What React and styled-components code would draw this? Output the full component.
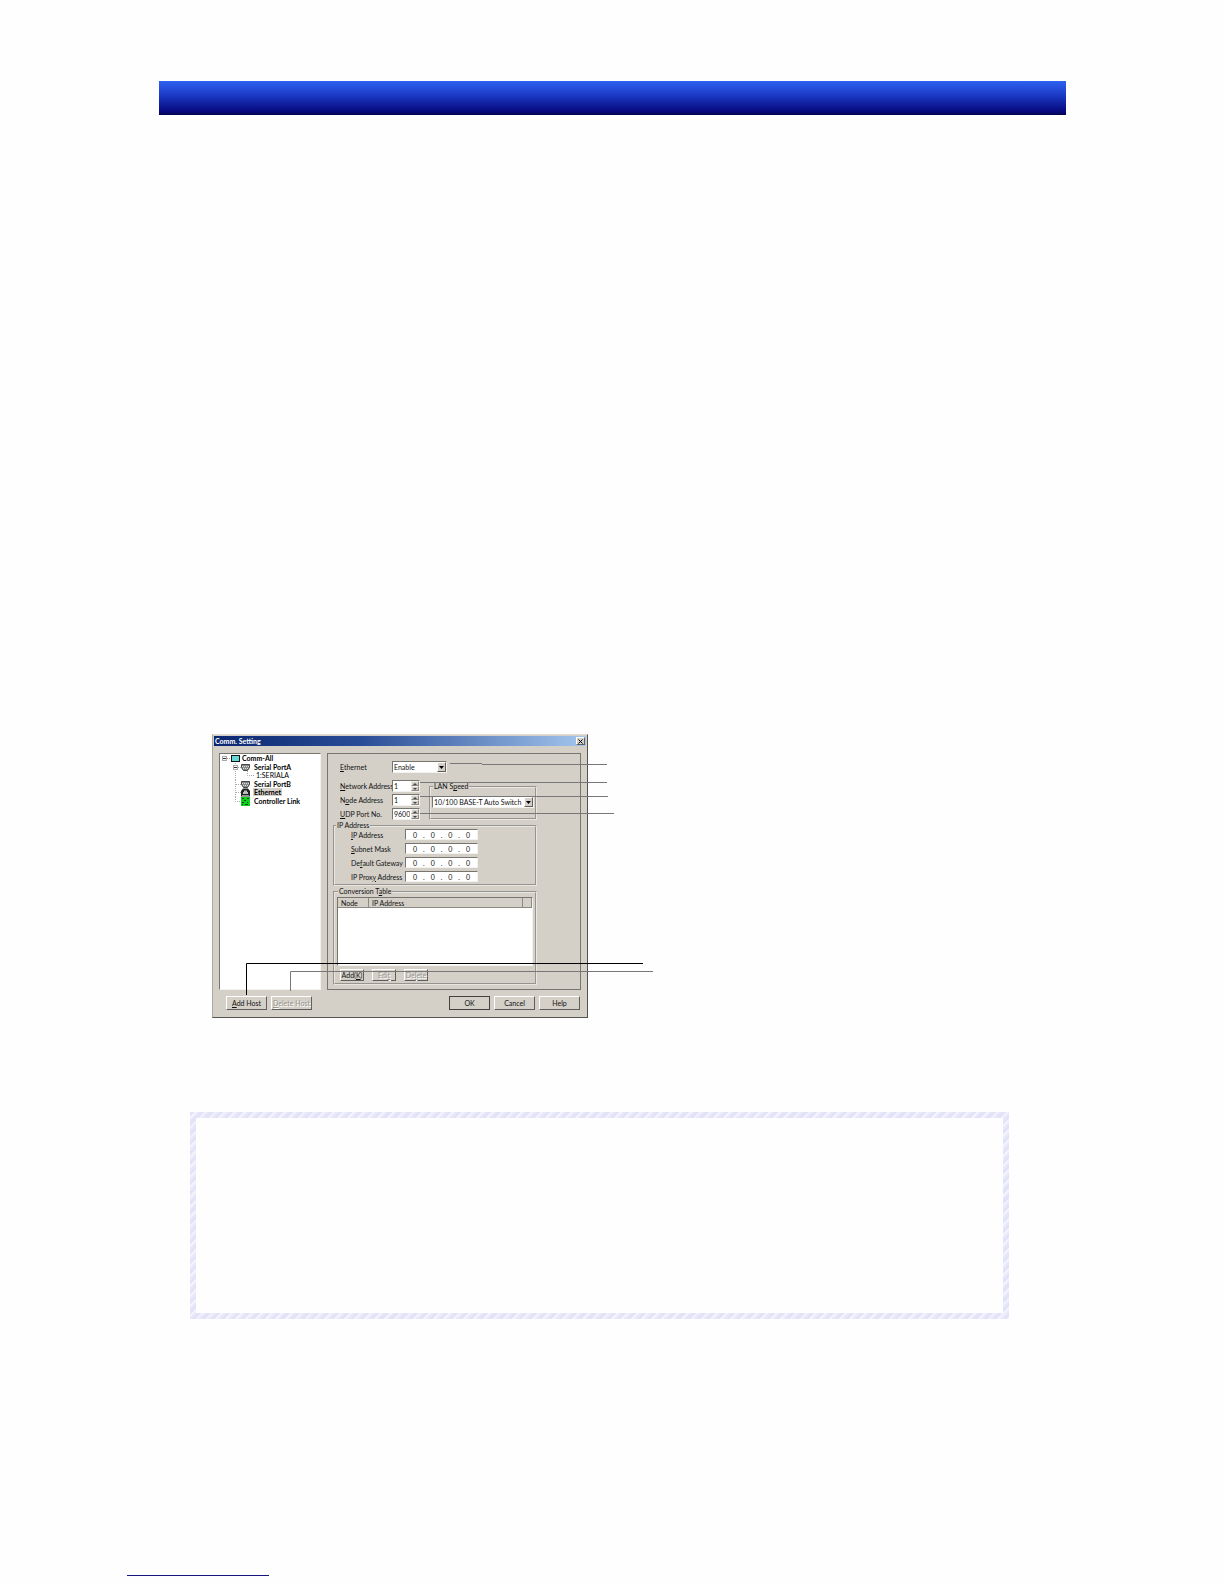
import React from 'react';
import styled, { createGlobalStyle, css } from 'styled-components';

const FACE = '#d4d0c8';
const SHADE = '#77756f';

const Global = createGlobalStyle`
  * { box-sizing: border-box; }
  body { margin: 0; background: #fefefe; }
  body, button, input, select { font-family: Lato, 'Liberation Sans', Arial, sans-serif; font-size: 7px; line-height: 8px; color: #111; }
`;

const Page = styled.main`
  min-height: 100vh;
  display: flex;
  flex-direction: column;
  padding: 81px 158px 8px 159px;
`;
const Banner = styled.header`
  height: 34px;
  background: linear-gradient(#2d62f0, #1c3cc8 40%, #06087c 90%, #030350);
`;
const Figure = styled.section`
  position: relative;
  margin: 619px 0 0 53px;
  width: 442px;
`;
const Note = styled.aside`
  margin: 94px 57px 0 31px;
  height: 207px;
  padding: 6px;
  background: repeating-linear-gradient(135deg, #e2e2f8 0 3px, #f3f3fd 3px 5px, #e9e9fa 5px 7px);
`;
const NoteBody = styled.div`
  height: 100%;
  background: #fefefe;
`;
const FooterRule = styled.hr`
  width: 142px;
  height: 1px;
  margin: auto 0 0 -32px;
  border: 0;
  background: #15157c;
`;

const Dialog = styled.form`
  width: 376px;
  background: ${FACE};
  border: 1px solid;
  border-color: #dedbd4 #55534f #55534f #aaa7a0;
  padding: 1px;
`;
const TitleBar = styled.div`
  height: 10px;
  display: flex;
  align-items: center;
  justify-content: space-between;
  padding: 0 1px;
  background: linear-gradient(90deg, #0b2670, #2a4d97 40%, #a3c6ee);
`;
const Title = styled.h1`
  margin: 0;
  font-size: 7px;
  line-height: 10px;
  color: #fff;
`;
const raised = css`
  background: ${FACE};
  border: 1px solid;
  border-color: #fff #605e5a #605e5a #fff;
`;
const CloseButton = styled.button`
  ${raised}
  width: 9px;
  height: 8px;
  padding: 0;
  display: grid;
  place-items: center;
`;
const Body = styled.div`
  display: flex;
  gap: 6px;
  height: 244px;
  padding: 7px 5px 0;
`;
const Tree = styled.ul`
  flex: 0 0 102px;
  margin: 0;
  padding: 0 1px;
  list-style: none;
  background: #fff;
  border: 1px solid;
  border-color: ${SHADE} #f4f2ee #f4f2ee ${SHADE};
  display: grid;
  grid-template-rows: repeat(3, 9px 8px);
  align-content: start;
`;
const TreeItem = styled.li`
  display: flex;
  align-items: flex-start;
  font-weight: ${(p) => (p.$plain ? 'normal' : 'bold')};
  white-space: nowrap;
  color: #000;
  svg { flex: none; }
`;
const TreeLabel = styled.span`
  padding: 0 1px;
  background: ${(p) => (p.$selected ? FACE : 'transparent')};
`;
const Panel = styled.div`
  flex: 1;
  border: 1px solid ${SHADE};
  padding: 7px 43px 0 5px;
`;
const Settings = styled.div`
  display: flex;
  gap: 9px;
  padding-left: 7px;
`;
const Fields = styled.div`
  display: grid;
  gap: 2px;
  flex: none;
`;
const Field = styled.div`
  display: grid;
  grid-template-columns: ${(p) => p.$label}px auto;
  align-items: center;
  justify-content: start;
  white-space: nowrap;
`;
const EthernetField = styled(Field)`
  padding: 0 0 7px 7px;
`;
const sunken = css`
  background: #fff;
  border: 1px solid;
  border-color: ${SHADE} #f4f2ee #f4f2ee ${SHADE};
`;
const Spin = styled.div`
  ${sunken}
  width: 28px;
  height: 12px;
  display: flex;
`;
const SpinInput = styled.input`
  flex: 1;
  min-width: 0;
  border: 0;
  padding: 0 1px;
  background: none;
`;
const SpinButtons = styled.div`
  width: 8px;
  display: grid;
  grid-template-rows: 1fr 1fr;
`;
const ArrowButton = styled.button`
  ${raised}
  border-color: #f0eeea #8b8983 #8b8983 #f0eeea;
  min-height: 0;
  padding: 0;
  display: grid;
  place-items: center;
`;
const SelectBox = styled.div`
  ${sunken}
  position: relative;
  width: ${(p) => p.$width};
  height: 12px;
`;
const Select = styled.select`
  appearance: none;
  display: block;
  width: 100%;
  height: 10px;
  border: 0;
  padding: 0 8px 0 1px;
  background: none;
`;
const DropMark = styled.span`
  ${raised}
  position: absolute;
  inset: 0 0 0 auto;
  width: 9px;
  display: grid;
  place-items: center;
  pointer-events: none;
`;
const Group = styled.fieldset`
  min-width: 0;
  margin: ${(p) => p.$margin || '0'};
  padding: ${(p) => p.$padding};
  border: 2px groove #e9e7e2;
`;
const Legend = styled.legend`
  margin-left: 1px;
  padding: 0 1px;
  height: 7px;
  line-height: 7px;
`;
const SpeedGroup = styled(Group)`
  flex: 1;
`;
const Addresses = styled.div`
  display: grid;
  gap: 3px;
  padding-left: 16px;
`;
const AddressBox = styled.div`
  ${sunken}
  width: 73px;
  height: 11px;
  padding: 0 1px;
  display: flex;
  align-items: center;
`;
const Octet = styled.input`
  flex: 1;
  min-width: 0;
  border: 0;
  padding: 0;
  background: none;
  text-align: center;
`;
const ListBox = styled.div`
  ${sunken}
  height: 69px;
`;
const Table = styled.table`
  width: 100%;
  border-collapse: separate;
  border-spacing: 0;
  table-layout: fixed;
`;
const Th = styled.th`
  width: ${(p) => p.$width || 'auto'};
  height: 10px;
  padding: 0 3px;
  background: ${FACE};
  border: solid;
  border-width: 0 1px 1px 0;
  border-color: #8b8983;
  font-weight: normal;
  line-height: 8px;
  text-align: left;
`;
const TableButtons = styled.div`
  display: flex;
  gap: 8px;
  padding: 3px 0 0 3px;
`;
const Button = styled.button`
  ${raised}
  width: ${(p) => (p.$small ? '24px' : '41px')};
  height: ${(p) => (p.$small ? '12px' : '14px')};
  padding: 0;
  white-space: nowrap;
  outline: ${(p) => (p.$primary ? '1px solid #44423f' : 'none')};
  outline-offset: -1px;
  &:disabled { color: #96938c; text-shadow: 1px 1px 0 #fff; }
`;
const Actions = styled.div`
  display: flex;
  gap: 4px;
  padding: 6px 6px 6px 12px;
`;
const Spacer = styled.div`
  flex: 1;
`;
const Callouts = styled.svg`
  position: absolute;
  left: 0;
  top: 0;
  pointer-events: none;
`;

const Down = () => (
  <svg width="5" height="3" viewBox="0 0 5 3" aria-hidden="true"><path d="M0 0h5L2.5 3z" fill="#000" /></svg>
);
const Tick = ({ up }) => (
  <svg width="4" height="2" viewBox="0 0 4 2" aria-hidden="true"><path d={up ? 'M0 2h4L2 0z' : 'M0 0h4L2 2z'} fill="#444" /></svg>
);
const dots = { stroke: '#aaa', strokeDasharray: '1 1', fill: 'none' };
const Expander = ({ x }) => (
  <g>
    <rect x={x + 0.5} y="2.5" width="4" height="4" fill="#fff" stroke="#aaa" />
    <path d={`M${x + 1} 4.5h3`} stroke="#333" />
  </g>
);
const SerialIcon = () => (
  <g>
    <path d="M20.500 1.500h8v3l-2 3h-4l-2-3z" fill="#8a8a88" stroke="#444" />
    <path d="M21 3.500h7M22 5.500h5" stroke="#ddd" strokeDasharray="1 1" />
  </g>
);
const art = {
  root: <><path d="M6 4.500h4" {...dots} /><Expander x={1} /><rect x="10.500" y="1.500" width="8" height="6" fill="#65d8d5" stroke="#111" /></>,
  portA: <><path d="M14.500 0v9M17 4.500h3" {...dots} /><Expander x={12} /><SerialIcon /></>,
  child: <><path d="M14.500 0v9M26.500 0v4.500h7" {...dots} /></>,
  portB: <><path d="M14.500 0v9M15 4.500h5" {...dots} /><SerialIcon /></>,
  ethernet: <><path d="M14.500 0v9M15 4.500h5" {...dots} /><path d="M20 8.500V3l2-2.500h5l2 2.500v5.500z" fill="#222" /><path d="M22 6V4h1V2.500h3V4h1v2z" fill="#bbb" /><path d="M21 7.500h7" stroke="#999" /></>,
  link: <><path d="M14.500 0v4.500h5" {...dots} /><rect x="20" y="0" width="9" height="9" fill="#10d020" /><path d="M21 1.500h2M26 1.500h2M23 3.500h2M21 5.500h2M26 5.500h1M24 7.500h3M21 7.500h1" stroke="#064a0a" fill="none" /></>,
};
const nodes = [
  ['root', 'Comm-All', 20],
  ['portA', 'Serial PortA', 32],
  ['child', '1:SERIALA', 34],
  ['portB', 'Serial PortB', 32],
  ['ethernet', 'Ethernet', 32],
  ['link', 'Controller Link', 32],
];

function NumberField({ id, value, children }) {
  return (
    <Field $label={52}>
      <label htmlFor={id}>{children}</label>
      <Spin>
        <SpinInput id={id} defaultValue={value} />
        <SpinButtons>
          <ArrowButton type="button" aria-label="Increase"><Tick up /></ArrowButton>
          <ArrowButton type="button" aria-label="Decrease"><Tick /></ArrowButton>
        </SpinButtons>
      </Spin>
    </Field>
  );
}

function AddressField({ id, children }) {
  return (
    <Field $label={54}>
      <label htmlFor={id}>{children}</label>
      <AddressBox>
        <Octet id={id} defaultValue="0" />.
        <Octet aria-label="Second octet" defaultValue="0" />.
        <Octet aria-label="Third octet" defaultValue="0" />.
        <Octet aria-label="Fourth octet" defaultValue="0" />
      </AddressBox>
    </Field>
  );
}

export default function App() {
  return (
    <Page>
      <Global />
      <Banner />
      <Figure>
        <Dialog onSubmit={(e) => e.preventDefault()}>
          <TitleBar>
            <Title>Comm. Setting</Title>
            <CloseButton type="button" aria-label="Close">
              <svg width="5" height="5" viewBox="0 0 5 5"><path d="M.5.5l4 4M4.500.5l-4 4" stroke="#000" /></svg>
            </CloseButton>
          </TitleBar>
          <Body>
            <Tree>
              {nodes.map(([kind, label, width]) => (
                <TreeItem key={kind} $plain={kind === 'child'}>
                  <svg width={width} height="9" viewBox={`0 0 ${width} 9`} aria-hidden="true">{art[kind]}</svg>
                  <TreeLabel $selected={kind === 'ethernet'}>{label}</TreeLabel>
                </TreeItem>
              ))}
            </Tree>
            <Panel>
              <EthernetField $label={52}>
                <label htmlFor="ethernet"><u>E</u>thernet</label>
                <SelectBox $width="55px">
                  <Select id="ethernet"><option>Enable</option></Select>
                  <DropMark><Down /></DropMark>
                </SelectBox>
              </EthernetField>
              <Settings>
                <Fields>
                  <NumberField id="network" value="1"><u>N</u>etwork Address</NumberField>
                  <NumberField id="node" value="1">N<u>o</u>de Address</NumberField>
                  <NumberField id="udp" value="9600"><u>U</u>DP Port No.</NumberField>
                </Fields>
                <SpeedGroup $margin="3px 0 0" $padding="6px 1px 0">
                  <Legend>LAN S<u>p</u>eed</Legend>
                  <SelectBox $width="100%">
                    <Select aria-label="LAN Speed"><option>10/100 BASE-T Auto Switch</option></Select>
                    <DropMark><Down /></DropMark>
                  </SelectBox>
                </SpeedGroup>
              </Settings>
              <Group $margin="2px 0 0" $padding="0 0 2px">
                <Legend>IP Address</Legend>
                <Addresses>
                  <AddressField id="ip"><u>I</u>P Address</AddressField>
                  <AddressField id="mask"><u>S</u>ubnet Mask</AddressField>
                  <AddressField id="gateway">De<u>f</u>ault Gateway</AddressField>
                  <AddressField id="proxy">IP Prox<u>y</u> Address</AddressField>
                </Addresses>
              </Group>
              <Group $margin="2px 0 0" $padding="2px 2px 2px">
                <Legend>Conversion T<u>a</u>ble</Legend>
                <ListBox>
                  <Table>
                    <thead><tr><Th $width="31px">Node</Th><Th>IP Address</Th><Th $width="9px" aria-label="Spare" /></tr></thead>
                  </Table>
                </ListBox>
                <TableButtons>
                  <Button type="button" $small>Add(<u>K</u>)</Button>
                  <Button type="button" $small disabled>Edi<u>t</u></Button>
                  <Button type="button" $small disabled>De<u>l</u>ete</Button>
                </TableButtons>
              </Group>
            </Panel>
          </Body>
          <Actions>
            <Button type="button"><u>A</u>dd Host</Button>
            <Button type="button" disabled><u>D</u>elete Host</Button>
            <Spacer />
            <Button $primary>OK</Button>
            <Button type="button">Cancel</Button>
            <Button type="button">Help</Button>
          </Actions>
        </Dialog>
        <Callouts width="442" height="284" viewBox="0 0 442 284" aria-hidden="true">
          <g fill="none" stroke="#777">
            <path d="M238 29.500h32M270 30.500h125M208 48.500h187M208 62.500h188M208 79.500h194" />
            <path d="M78.500 257v-19.500H441" />
          </g>
          <path d="M34.500 261v-31.500H431" fill="none" stroke="#000" />
        </Callouts>
      </Figure>
      <Note><NoteBody /></Note>
      <FooterRule />
    </Page>
  );
}
